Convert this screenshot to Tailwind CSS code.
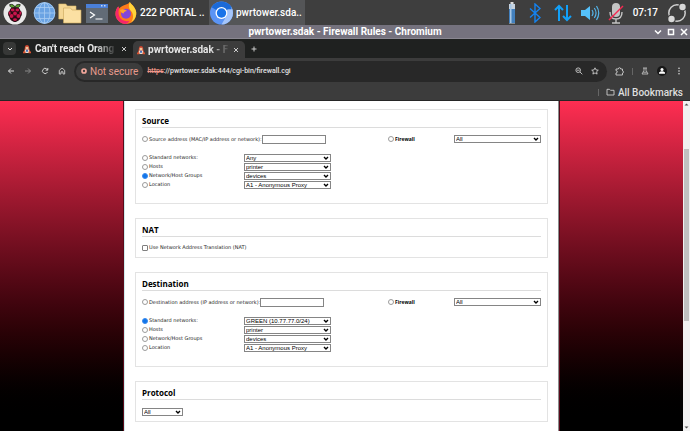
<!DOCTYPE html>
<html lang="en">
<head>
<meta charset="utf-8">
<meta name="viewport" content="width=device-width, initial-scale=1">
<title>pwrtower.sdak - Firewall Rules</title>
<script src="https://cdn.jsdelivr.net/npm/@tailwindcss/browser@4"></script>
</head>
<body class="h-screen flex flex-col overflow-hidden bg-[#3c3c3c] font-['Roboto',sans-serif] text-white">

<svg class="hidden" aria-hidden="true">
  <symbol id="chevron" viewBox="0 0 6 6"><path d="M1 2l2 2 2-2" fill="none" stroke="#000" stroke-width="1.4"/></symbol>
  <symbol id="mascot" viewBox="0 0 10 10"><path d="M5 1C3.500 1 2.800 2 2.800 4L1.800 8h6.400L7.200 4C7.200 2 6.500 1 5 1z" fill="#c8402c"/><path d="M3.600 2.800h2.800v2.400H3.600z" fill="#f3c79a"/><path d="M3 5.500h4l.5 3.500h-5z" fill="#e8e0d0"/><path d="M1 7.500h2.500V9.300H1zM6.500 7.500H9v1.800H6.500z" fill="#d9512f"/><path d="M4 5.800h2v2H4z" fill="#4a70b8"/></symbol>
</svg>

<!-- Desktop panel -->
<header class="flex h-[25px] shrink-0 items-center bg-[#3e3e3e] text-[10px] font-medium">
  <nav class="flex items-center pl-[3px]">
    <button aria-label="Menu" class="size-6">
      <svg viewBox="0 0 24 24" class="size-6"><circle cx="12" cy="12" r="11.500" fill="#e9e9e9"/><path d="M11.800 7C9 7.500 6.500 6 6.700 3.500c3-.6 4.800.8 5.200 3 .4-2.200 2.300-3.600 5.300-3C17.300 6 15 7.500 11.800 7z" fill="#5aa02c" stroke="#222" stroke-width=".8"/><path d="M12 6.500c3-.8 5 .8 5.300 3 2 1.500 2.200 4.500.5 6.200C17.300 18.500 14.500 21 12 21s-5.300-2.500-5.800-5.300c-1.700-1.700-1.500-4.700.5-6.200C7 7.300 9 5.700 12 6.500z" fill="#2a0b14"/><g fill="#c7164b"><ellipse cx="9.600" cy="9" rx="2" ry="1.400"/><ellipse cx="14.400" cy="9" rx="2" ry="1.400"/><circle cx="12" cy="12.500" r="1.900"/><circle cx="8.600" cy="15" r="1.900"/><circle cx="15.400" cy="15" r="1.900"/><ellipse cx="6.700" cy="12" rx="1" ry="1.700"/><ellipse cx="17.300" cy="12" rx="1" ry="1.700"/><ellipse cx="12" cy="18.600" rx="1.900" ry="1.300"/></g></svg>
    </button>
    <button aria-label="Web browser" class="ml-[6px] h-6 w-[23px]">
      <svg viewBox="0 0 23 24" class="h-6 w-[23px]"><circle cx="11.500" cy="12" r="10.700" fill="#6ba3e3"/><g fill="none" stroke="#a9cdf3" stroke-width=".8"><circle cx="11.500" cy="12" r="10.300"/><ellipse cx="11.500" cy="12" rx="5.500" ry="10.300"/><path d="M11.500 1.500v21M1 12h21M3 6.500h17M3 17.500h17"/></g></svg>
    </button>
    <button aria-label="File manager" class="ml-[2px] h-6 w-6">
      <svg viewBox="0 0 24 24" class="size-6"><path d="M.8 3h7l1.500 2H18v13H.8z" fill="#f5d795" stroke="#d9b566" stroke-width=".6"/><path d="M5.500 7h7l1.500 2h9v13H5.500z" fill="#fbe0a3" stroke="#caa659" stroke-width=".6"/></svg>
    </button>
    <button aria-label="Terminal" class="ml-[4px] h-6 w-[22px]">
      <svg viewBox="0 0 22 24" class="h-6 w-[22px]"><path d="M0 3h22v19H0z" fill="#626b76"/><path d="M0 3h22v4H0z" fill="#4a7fd8"/><path d="M15 4h1.500v1.500H15zM18 4h1.500v1.500H18z" fill="#c5d8f5"/><path d="M4 11l4.500 3L4 17M9.500 18h7" fill="none" stroke="#fff" stroke-width="1.200"/></svg>
    </button>
  </nav>
  <button class="ml-[7px] flex h-full w-[94px] items-center gap-[3px]">
    <svg viewBox="0 0 22 22" class="size-[22px] shrink-0"><path d="M11 2.500c2-.5 3-1.500 3.800-2.500.8 2 3 3 4.500 5.500 1.500 2.300 2.200 4 1.900 7C20.600 18 16.500 22 11 22S.5 17.500.5 12C.5 8.500 1.800 6 3.300 4.500l.8 2C5.500 5 7 4 11 2.500z" fill="#ff7a1a"/><path d="M14.800 0c.8 2 3 3 4.500 5.500 1.500 2.300 2.200 4 1.900 7-.5 3.500-2.500 6.500-5.200 8 3-4 2.500-9 0-11.500-2-2-3-5-1.200-9z" fill="#ffd43a"/><path d="M.5 12c0-3.500 1.300-6 2.800-7.500l.8 2c-1.200 4-.6 9 3.400 11.500 2 1.200 4.500 1.500 7 .8C13 21 11.500 22 11 22 5.500 22 .5 17.500.5 12z" fill="#f5266b"/><circle cx="11" cy="11.700" r="5" fill="#8446d8"/><path d="M5 8c3-1.500 5-.5 7 1-2 0-3 1-3.500 2.500C6.500 11 5.300 10 5 8z" fill="#ffa42a"/></svg>
    <span>222 PORTAL ..</span>
  </button>
  <button class="flex h-full w-[96px] items-center gap-[2px] bg-[#545557]">
    <svg viewBox="0 0 25 24" class="h-6 w-[25px] shrink-0"><circle cx="12.500" cy="12" r="11.500" fill="#5b94f5"/><path d="M12.500 12L2.600 6.200A11.500 11.500 0 0 1 22.500 6.300z" fill="#1b6ad8"/><path d="M22.500 6.300A11.500 11.500 0 0 1 12.500 23.500l5-8.500a6 6 0 0 0 0-6z" fill="#a5c5fb"/><path d="M12.500 6.300h10v2h-10z" fill="#1b6ad8"/><circle cx="12.500" cy="12" r="6" fill="#fff"/><circle cx="12.500" cy="12" r="4.700" fill="#1a73e8"/></svg>
    <span>pwrtower.sda..</span>
  </button>
  <div class="ml-auto flex items-center">
    <svg viewBox="0 0 8 22" class="h-[22px] w-2"><path d="M2.500 0h3v2h-3z" fill="#ddd"/><path d="M1 2h6v19.500H1z" fill="#c5d2df"/><path d="M1 7h6v14H1z" fill="#4380bd"/><path d="M2 2h1.500v19H2z" fill="#a8c7e5"/></svg>
    <svg viewBox="0 0 12 20" class="ml-[13px] h-5 w-3"><path d="M1 5.500l10 9L6 19V1l5 4.500-10 9" fill="none" stroke="#1583f0" stroke-width="1.400"/></svg>
    <svg viewBox="0 0 18 18" class="ml-[13px] size-[18px]"><path d="M5 17V2M1 6l4-4 4 4M13 1v15M9 12l4 4 4-4" fill="none" stroke="#12a0f8" stroke-width="2"/></svg>
    <svg viewBox="0 0 20 18" class="ml-[8px] h-[18px] w-5"><path d="M1 6h4l5-4v14l-5-4H1z" fill="#55c1fa"/><path d="M12 6q2 3 0 6M14.300 4q3.500 5 0 10M16.500 2q4.500 7 0 14" fill="none" stroke="#55b5ea" stroke-width="1.200"/></svg>
    <svg viewBox="0 0 16 22" class="ml-[8px] h-[22px] w-4"><rect x="4" y="1" width="8" height="14" rx="4" fill="#c4c4c4"/><path d="M2 10q0 7 6 7t6-7M8 17v3.500M4 21h8" fill="none" stroke="#c4c4c4" stroke-width="1.400"/><path d="M1 18L15 4" stroke="#f52850" stroke-width="1.500"/></svg>
    <time class="ml-[9px]">07:17</time>
    <svg viewBox="0 0 20 22" class="mr-[3px] ml-[9px] h-[22px] w-5"><circle cx="10" cy="11" r="8.200" fill="none" stroke="#d0d0d0" stroke-width="1.500"/><circle cx="15.500" cy="5" r="4.400" fill="#3e3e3e"/><circle cx="4.500" cy="17" r="4.400" fill="#3e3e3e"/><circle cx="15.500" cy="5" r="3.200" fill="#d8d8d8"/><circle cx="4.500" cy="17" r="3.200" fill="#d8d8d8"/></svg>
  </div>
</header>

<!-- Window title bar -->
<div class="flex h-[14px] shrink-0 items-center border-b border-[#8a8791] bg-[#75727e]">
  <h1 class="flex-1 pl-[36px] text-center text-[10px] leading-[13px] font-bold">pwrtower.sdak - Firewall Rules - Chromium</h1>
  <div class="flex justify-end gap-[5px] pr-[2px]">
    <button aria-label="Minimise"><svg viewBox="0 0 8 8" class="size-2"><path d="M1 2.500l3 3 3-3" fill="none" stroke="#fff" stroke-width="1.500"/></svg></button>
    <button aria-label="Maximise"><svg viewBox="0 0 8 8" class="size-2"><path d="M1.500 1.500h5v5h-5z" fill="none" stroke="#fff" stroke-width="1.500"/></svg></button>
    <button aria-label="Close"><svg viewBox="0 0 8 8" class="size-2"><path d="M1 1l6 6M7 1L1 7" stroke="#fff" stroke-width="1.500"/></svg></button>
  </div>
</div>

<!-- Tab strip -->
<div class="flex h-[19px] shrink-0 items-center bg-[#1f2120] text-[10px] font-bold text-[#e6e6e6]">
  <button aria-label="Search tabs" class="ml-[3px] flex size-[13px] items-center justify-center rounded-[4px] bg-[#373837]"><svg viewBox="0 0 6 6" class="size-[6px]"><path d="M1 2l2 2 2-2" fill="none" stroke="#eee" stroke-width="1"/></svg></button>
  <div class="ml-[6px] flex w-[108px] items-center">
    <svg class="size-[10px] shrink-0"><use href="#mascot"/></svg>
    <span class="ml-[3px] w-[82px] whitespace-nowrap mask-r-from-75%">Can't reach Orang</span>
    <button aria-label="Close tab" class="ml-[4px]"><svg viewBox="0 0 6 6" class="size-[6px]"><path d="M1 1l4 4M5 1L1 5" stroke="#ddd" stroke-width=".9"/></svg></button>
  </div>
  <div class="ml-[3px] flex h-[17px] w-[112px] items-center self-end rounded-t-[5px] bg-[#3c3c3c] pl-[3px]">
    <svg class="size-[10px] shrink-0"><use href="#mascot"/></svg>
    <span class="ml-[2px] w-[82px] whitespace-nowrap mask-r-from-75%">pwrtower.sdak - F</span>
    <button aria-label="Close tab" class="ml-[3px]"><svg viewBox="0 0 6 6" class="size-[6px]"><path d="M1 1l4 4M5 1L1 5" stroke="#ddd" stroke-width=".9"/></svg></button>
  </div>
  <button aria-label="New tab" class="ml-[6px]"><svg viewBox="0 0 6 6" class="size-[6px]"><path d="M3 .5v5M.5 3h5" stroke="#ddd" stroke-width=".9"/></svg></button>
</div>

<!-- Toolbar -->
<div class="flex h-[26px] shrink-0 items-center bg-[#3c3c3c]">
  <div class="flex gap-[9px] pl-[7px]">
    <button aria-label="Back"><svg viewBox="0 0 8 8" class="size-2"><path d="M7 4H1.500M4 1.500L1.500 4 4 6.500" fill="none" stroke="#ddd"/></svg></button>
    <button aria-label="Forward"><svg viewBox="0 0 8 8" class="size-2"><path d="M1 4h5.500M4 1.500L6.500 4 4 6.500" fill="none" stroke="#888"/></svg></button>
    <button aria-label="Reload"><svg viewBox="0 0 8 8" class="size-2"><path d="M6.500 5a2.600 2.600 0 1 1-.6-2.900L6.700 3M6.800 1v2.200H4.600" fill="none" stroke="#ddd" stroke-width=".9"/></svg></button>
    <button aria-label="Home"><svg viewBox="0 0 8 8" class="size-2"><path d="M1.300 3.300L4 1l2.700 2.300V7H5V4.800H3V7H1.300z" fill="none" stroke="#ccc" stroke-width=".9"/></svg></button>
  </div>
  <div class="ml-[8px] flex h-[21px] flex-1 items-center rounded-full bg-[#282828] pr-[8px] pl-[2px]">
    <button class="flex h-[17px] items-center gap-[3px] rounded-full bg-[#3c3c3c] px-[5px] text-[10px] text-[#e79a8c]">
      <svg viewBox="0 0 6 6" class="size-[6px]"><circle cx="3" cy="3" r="2" fill="none" stroke="#f2a79b" stroke-width="1.700"/></svg>Not secure
    </button>
    <div class="ml-[4px] flex-1 text-[7px] font-medium text-[#e3e3e3]"><s class="text-[#f2988b]">https</s>://pwrtower.sdak:444/cgi-bin/firewall.cgi</div>
    <button aria-label="Zoom"><svg viewBox="0 0 8 8" class="size-2"><path d="M5 5l2.300 2.300M1.800 3.200h2.800" stroke="#ccc" stroke-width=".9"/><circle cx="3.200" cy="3.200" r="2.300" fill="none" stroke="#ccc" stroke-width=".9"/></svg></button>
    <button aria-label="Bookmark this tab" class="ml-[8px]"><svg viewBox="0 0 8 8" class="size-2"><path d="M4 .8l1 2.100 2.300.3-1.700 1.500.5 2.400L4 5.900 1.900 7.100l.5-2.400L.7 3.200 3 2.900z" fill="none" stroke="#ddd" stroke-width=".8"/></svg></button>
  </div>
  <div class="flex items-center gap-[8px] pr-[7px] pl-[8px]">
    <button aria-label="Extensions"><svg viewBox="0 0 9 9" class="size-[9px]"><path d="M1 2h2.300q0-1.300 1.200-1.300T5.700 2H7.500v2q1 0 1 1t-1 1v2H1V6q1.300 0 1.300-1.200T1 3.700z" fill="none" stroke="#ccc" stroke-width=".9"/></svg></button>
    <span class="h-[7px] w-px bg-[#666]"></span>
    <button aria-label="Labs"><svg viewBox="0 0 8 8" class="size-2"><path d="M2 1h4M3 1v2.300L1 7h6L5 3.300V1M2.200 5.200h3.600" fill="none" stroke="#ccc" stroke-width=".8"/></svg></button>
    <button aria-label="Profile"><svg viewBox="0 0 10 10" class="size-[10px]"><circle cx="5" cy="5" r="5" fill="#181818"/><circle cx="5" cy="3.500" r="1.500" fill="#fff"/><path d="M2 7.700V6.500Q3.500 5.300 5 5.300t3 1.200v1.200z" fill="#fff"/></svg></button>
    <button aria-label="Browser menu"><svg viewBox="0 0 8 8" class="size-2"><g fill="#ddd"><circle cx="4" cy="1.300" r=".8"/><circle cx="4" cy="4" r=".8"/><circle cx="4" cy="6.700" r=".8"/></g></svg></button>
  </div>
</div>

<!-- Bookmarks bar -->
<div class="flex h-[17px] shrink-0 items-center justify-end border-b border-[#262626] pr-[7px] text-[10px] font-medium text-[#dedede]">
  <span class="mr-[7px] h-[7px] w-px bg-[#666]"></span>
  <button class="flex items-center gap-[3px]"><svg viewBox="0 0 9 8" class="h-2 w-[9px]"><path d="M1 1.300h2.500l1 1H8V7H1z" fill="none" stroke="#ccc" stroke-width=".9"/></svg>All Bookmarks</button>
</div>

<!-- Web page -->
<div class="flex min-h-0 flex-1">
  <div class="min-w-0 flex-1 overflow-hidden bg-linear-to-b from-[#ff2e52] to-black to-98%">
    <form class="mx-auto flex h-full w-[63.7%] flex-col gap-[14px] border-l border-r border-l-[#cdebec] border-r-[#8a8f8f] bg-white px-[10px] pt-2 font-['DejaVu_Sans',sans-serif] text-[5px] leading-[9px] text-[#222] shadow-[0_0_0_1px_#5a0a1a]">

      <section class="border border-[#e3e3e3] px-[6px] pt-1 pb-[13px]">
        <h2 class="border-b border-[#dcdcdc] font-['Open_Sans',sans-serif] text-[8px] leading-[13px] font-bold text-black">Source</h2>
        <div class="mt-[6px] grid h-[10px] grid-cols-[246fr_66fr_87fr] items-center">
          <div class="flex items-center">
            <label class="flex items-center gap-px"><input type="radio" name="src" class="size-[6px] shrink-0 appearance-none rounded-full border border-[#9b9b9b]">Source address (MAC/IP address or network):</label>
            <input type="text" aria-label="Source address" class="h-[9px] w-[64px] border border-[#858585] bg-white">
          </div>
          <label class="flex items-center gap-px font-['Open_Sans',sans-serif] font-bold text-black"><input type="radio" name="src" class="size-[6px] shrink-0 appearance-none rounded-full border border-[#9b9b9b]">Firewall</label>
          <div class="relative flex"><select aria-label="Source firewall interface" class="h-2 w-full appearance-none border border-[#858585] bg-white pl-px font-['Liberation_Sans',sans-serif] text-[6px] leading-[6px] text-black"><option>All</option></select><svg class="pointer-events-none absolute top-px right-[2px] size-[6px]"><use href="#chevron"/></svg></div>
        </div>
        <div class="mt-[9px] grid grid-cols-[102fr_87fr_210fr] auto-rows-[9px] items-center pb-px">
          <label class="col-start-1 flex items-center gap-px"><input type="radio" name="src" class="size-[6px] shrink-0 appearance-none rounded-full border border-[#9b9b9b]">Standard networks:</label>
          <div class="relative flex"><select aria-label="Source standard network" class="h-2 w-full appearance-none border border-[#858585] bg-white pl-px font-['Liberation_Sans',sans-serif] text-[6px] leading-[6px] text-black"><option>Any</option></select><svg class="pointer-events-none absolute top-px right-[2px] size-[6px]"><use href="#chevron"/></svg></div>
          <label class="col-start-1 flex items-center gap-px"><input type="radio" name="src" class="size-[6px] shrink-0 appearance-none rounded-full border border-[#9b9b9b]">Hosts</label>
          <div class="relative flex"><select aria-label="Source host" class="h-2 w-full appearance-none border border-[#858585] bg-white pl-px font-['Liberation_Sans',sans-serif] text-[6px] leading-[6px] text-black"><option>printer</option></select><svg class="pointer-events-none absolute top-px right-[2px] size-[6px]"><use href="#chevron"/></svg></div>
          <label class="col-start-1 flex items-center gap-px"><input type="radio" name="src" checked class="size-[6px] shrink-0 appearance-none rounded-full border border-[#3a8bf0] bg-[#1275e8]">Network/Host Groups</label>
          <div class="relative flex"><select aria-label="Source group" class="h-2 w-full appearance-none border border-[#858585] bg-white pl-px font-['Liberation_Sans',sans-serif] text-[6px] leading-[6px] text-black"><option>devices</option></select><svg class="pointer-events-none absolute top-px right-[2px] size-[6px]"><use href="#chevron"/></svg></div>
          <label class="col-start-1 flex items-center gap-px"><input type="radio" name="src" class="size-[6px] shrink-0 appearance-none rounded-full border border-[#9b9b9b]">Location</label>
          <div class="relative flex"><select aria-label="Source location" class="h-2 w-full appearance-none border border-[#858585] bg-white pl-px font-['Liberation_Sans',sans-serif] text-[6px] leading-[6px] text-black"><option>A1 - Anonymous Proxy</option></select><svg class="pointer-events-none absolute top-px right-[2px] size-[6px]"><use href="#chevron"/></svg></div>
        </div>
      </section>

      <section class="border border-[#e3e3e3] px-[6px] pt-1 pb-[5px]">
        <h2 class="border-b border-[#dcdcdc] font-['Open_Sans',sans-serif] text-[8px] leading-[13px] font-bold text-black">NAT</h2>
        <label class="mt-[6px] flex items-center gap-px"><input type="checkbox" class="size-[6px] shrink-0 appearance-none rounded-[1px] border border-[#7f7f7f]">Use Network Address Translation (NAT)</label>
      </section>

      <section class="border border-[#e3e3e3] px-[6px] pt-1 pb-[13px]">
        <h2 class="border-b border-[#dcdcdc] font-['Open_Sans',sans-serif] text-[8px] leading-[13px] font-bold text-black">Destination</h2>
        <div class="mt-[6px] grid h-[10px] grid-cols-[246fr_66fr_87fr] items-center">
          <div class="flex items-center">
            <label class="flex items-center gap-px"><input type="radio" name="dst" class="size-[6px] shrink-0 appearance-none rounded-full border border-[#9b9b9b]">Destination address (IP address or network):</label>
            <input type="text" aria-label="Destination address" class="h-[9px] w-[64px] border border-[#858585] bg-white">
          </div>
          <label class="flex items-center gap-px font-['Open_Sans',sans-serif] font-bold text-black"><input type="radio" name="dst" class="size-[6px] shrink-0 appearance-none rounded-full border border-[#9b9b9b]">Firewall</label>
          <div class="relative flex"><select aria-label="Destination firewall interface" class="h-2 w-full appearance-none border border-[#858585] bg-white pl-px font-['Liberation_Sans',sans-serif] text-[6px] leading-[6px] text-black"><option>All</option></select><svg class="pointer-events-none absolute top-px right-[2px] size-[6px]"><use href="#chevron"/></svg></div>
        </div>
        <div class="mt-[9px] grid grid-cols-[102fr_87fr_210fr] auto-rows-[9px] items-center pb-px">
          <label class="col-start-1 flex items-center gap-px"><input type="radio" name="dst" checked class="size-[6px] shrink-0 appearance-none rounded-full border border-[#3a8bf0] bg-[#1275e8]">Standard networks:</label>
          <div class="relative flex"><select aria-label="Destination standard network" class="h-2 w-full appearance-none border border-[#858585] bg-white pl-px font-['Liberation_Sans',sans-serif] text-[6px] leading-[6px] text-black"><option>GREEN (10.77.77.0/24)</option></select><svg class="pointer-events-none absolute top-px right-[2px] size-[6px]"><use href="#chevron"/></svg></div>
          <label class="col-start-1 flex items-center gap-px"><input type="radio" name="dst" class="size-[6px] shrink-0 appearance-none rounded-full border border-[#9b9b9b]">Hosts</label>
          <div class="relative flex"><select aria-label="Destination host" class="h-2 w-full appearance-none border border-[#858585] bg-white pl-px font-['Liberation_Sans',sans-serif] text-[6px] leading-[6px] text-black"><option>printer</option></select><svg class="pointer-events-none absolute top-px right-[2px] size-[6px]"><use href="#chevron"/></svg></div>
          <label class="col-start-1 flex items-center gap-px"><input type="radio" name="dst" class="size-[6px] shrink-0 appearance-none rounded-full border border-[#9b9b9b]">Network/Host Groups</label>
          <div class="relative flex"><select aria-label="Destination group" class="h-2 w-full appearance-none border border-[#858585] bg-white pl-px font-['Liberation_Sans',sans-serif] text-[6px] leading-[6px] text-black"><option>devices</option></select><svg class="pointer-events-none absolute top-px right-[2px] size-[6px]"><use href="#chevron"/></svg></div>
          <label class="col-start-1 flex items-center gap-px"><input type="radio" name="dst" class="size-[6px] shrink-0 appearance-none rounded-full border border-[#9b9b9b]">Location</label>
          <div class="relative flex"><select aria-label="Destination location" class="h-2 w-full appearance-none border border-[#858585] bg-white pl-px font-['Liberation_Sans',sans-serif] text-[6px] leading-[6px] text-black"><option>A1 - Anonymous Proxy</option></select><svg class="pointer-events-none absolute top-px right-[2px] size-[6px]"><use href="#chevron"/></svg></div>
        </div>
      </section>

      <section class="border border-[#e3e3e3] px-[6px] pt-1 pb-[5px]">
        <h2 class="border-b border-[#dcdcdc] font-['Open_Sans',sans-serif] text-[8px] leading-[13px] font-bold text-black">Protocol</h2>
        <div class="relative mt-2 flex w-[41px]"><select aria-label="Protocol" class="h-2 w-full appearance-none border border-[#858585] bg-white pl-px font-['Liberation_Sans',sans-serif] text-[6px] leading-[6px] text-black"><option>All</option></select><svg class="pointer-events-none absolute top-px right-[2px] size-[6px]"><use href="#chevron"/></svg></div>
      </section>
    </form>
  </div>

  <div class="flex w-[7px] flex-col items-center bg-[#f1f1f1]" aria-hidden="true">
    <svg viewBox="0 0 7 7" class="size-[7px]"><path d="M1.500 4.500h4l-2-2z" fill="#505050"/></svg>
    <div class="flex-[41]"></div>
    <div class="w-[5px] flex-[172] bg-[#c1c1c1]"></div>
    <div class="flex-[103]"></div>
    <svg viewBox="0 0 7 7" class="size-[7px]"><path d="M1.500 2.500h4l-2 2z" fill="#505050"/></svg>
  </div>
</div>
</body>
</html>
